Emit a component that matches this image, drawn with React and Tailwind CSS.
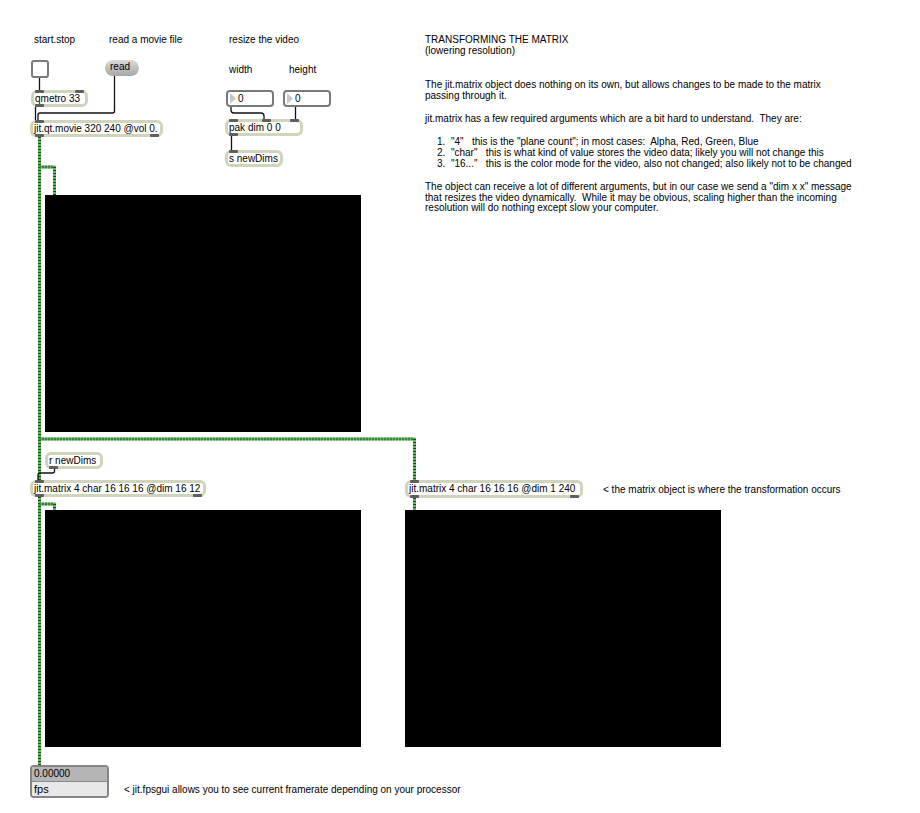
import React from 'react';

const font = { fontFamily: '"Liberation Sans", Arial, sans-serif' };

// small dark inlet / outlet tab
const Port = ({ className }) => (
    <div className={`absolute h-[3px] w-[9px] rounded-[1px] bg-[#5e5e5e] ${className}`} />
);

const Obj = ({ className, children, ports }) => (
    <div className={`absolute box-border rounded-[6px] border-[3px] border-[#d0d4bb] bg-white text-[10px] leading-[11px] text-black pl-[1px] whitespace-nowrap ${className}`}>
        {children}
        {ports}
    </div>
);

const NumBox = ({ className }) => (
    <div className={`absolute box-border flex items-center rounded-[4px] border-2 border-[#7a7a7a] bg-white text-[10px] leading-[11px] ${className}`}>
        <svg width="8" height="11" className="ml-[1px]">
            <polygon points="1,0 7,5.5 1,11" fill="#c8c8c8" />
        </svg>
        <span className="ml-[1px]">0</span>
    </div>
);

const Label = ({ className, children }) => (
    <div className={`absolute text-[10px] leading-[11px] text-black whitespace-pre ${className}`}>{children}</div>
);

const Cord = ({ d }) => (
    <g>
        <path d={d} fill="none" stroke="#5cbc5c" strokeWidth="3" />
        <path d={d} fill="none" stroke="#214421" strokeWidth="3" strokeDasharray="1 2" />
    </g>
);

const App = () => {
    return (
        <div className="relative w-[920px] h-[813px] overflow-hidden bg-white" style={font}>
            {/* patch cords */}
            <svg className="absolute left-0 top-0" width="920" height="813">
                <Cord d="M39.5 137 V480" />
                <Cord d="M39.5 497 V765" />
                <Cord d="M39.5 167 H54.5 V195" />
                <Cord d="M39.5 439 H414.5 V480" />
                <Cord d="M39.5 504 H54.5 V510" />
                <Cord d="M414.5 498 V510" />
                <g fill="none" stroke="#111" strokeWidth="1.3">
                    <path d="M39.5 78 V90" />
                    <path d="M35.5 107 V120" />
                    <path d="M114.5 76 V111 Q114.5 113 112.5 113 H40 Q38 113 38 115 V120" />
                    <path d="M231 106 V110 Q231 113 234 113 H261 Q264 113 264 116 V119" />
                    <path d="M295.5 106 V119" />
                    <path d="M231.5 136 V150" />
                    <path d="M54.5 469 V471 Q54.5 473 52.5 473 H40 Q38 473 38 475 V480" />
                </g>
            </svg>

            {/* videos */}
            <div className="absolute left-[45px] top-[195px] h-[237px] w-[316px] bg-black" />
            <div className="absolute left-[45px] top-[510px] h-[237px] w-[316px] bg-black" />
            <div className="absolute left-[405px] top-[510px] h-[237px] w-[316px] bg-black" />

            {/* labels */}
            <Label className="left-[34px] top-[34px]">start.stop</Label>
            <Label className="left-[109px] top-[34px]">read a movie file</Label>
            <Label className="left-[229px] top-[34px]">resize the video</Label>
            <Label className="left-[229px] top-[64px]">width</Label>
            <Label className="left-[289px] top-[64px]">height</Label>

            {/* toggle + message */}
            <div className="absolute left-[31px] top-[60px] h-[18px] w-[18px] box-border rounded-[3px] border-2 border-[#7a7a7a] bg-white" />
            <div className="absolute left-[105px] top-[60px] h-[16px] w-[34px] rounded-full bg-gradient-to-b from-[#dcdcdc] to-[#a6a6a6] text-[10px] leading-[14px] pl-[5px]">
                read
            </div>

            <Obj className="left-[31px] top-[90px] h-[17px] w-[57px]"
                ports={<><Port className="left-[1px] top-[-3px]" /><Port className="right-[1px] top-[-3px]" /><Port className="left-[1px] bottom-[-3px]" /></>}>
                qmetro 33
            </Obj>
            <Obj className="left-[30px] top-[120px] h-[17px] w-[133px]"
                ports={<><Port className="left-[2px] top-[-3px]" /><Port className="left-[2px] bottom-[-3px]" /><Port className="right-[1px] bottom-[-3px]" /></>}>
                jit.qt.movie 320 240 @vol 0.
            </Obj>

            <NumBox className="left-[226px] top-[90px] h-[17px] w-[48px]" />
            <NumBox className="left-[283px] top-[90px] h-[17px] w-[48px]" />

            <Obj className="left-[225px] top-[119px] h-[17px] w-[78px]"
                ports={<><Port className="left-[1px] top-[-3px]" /><Port className="left-[34px] top-[-3px]" /><Port className="right-[1px] top-[-3px]" /><Port className="left-[1px] bottom-[-3px]" /></>}>
                pak dim 0 0
            </Obj>
            <Obj className="left-[225px] top-[150px] h-[17px] w-[58px]"
                ports={<Port className="left-[1px] top-[-3px]" />}>
                s newDims
            </Obj>

            <Obj className="left-[45px] top-[452px] h-[17px] w-[58px]"
                ports={<Port className="left-[1px] bottom-[-3px]" />}>
                r newDims
            </Obj>
            <Obj className="left-[30px] top-[480px] h-[17px] w-[176px]"
                ports={<><Port className="left-[2px] top-[-3px]" /><Port className="left-[2px] bottom-[-3px]" /><Port className="right-[1px] bottom-[-3px]" /></>}>
                jit.matrix 4 char 16 16 16 @dim 16 12
            </Obj>
            <Obj className="left-[405px] top-[480px] h-[18px] w-[178px]"
                ports={<><Port className="left-[2px] top-[-3px]" /><Port className="left-[2px] bottom-[-3px]" /><Port className="right-[1px] bottom-[-3px]" /></>}>
                jit.matrix 4 char 16 16 16 @dim 1 240
            </Obj>
            <Label className="left-[603px] top-[484px]">{'< the matrix object is where the transformation occurs'}</Label>

            {/* fps gui */}
            <div className="absolute left-[30px] top-[765px] flex h-[33px] w-[79px] box-border flex-col overflow-hidden rounded-[4px] border-2 border-[#858585]">
                <div className="h-[15px] border-b border-[#8a8a8a] bg-[#b5b5b5] pl-[2px] text-[10px] leading-[14px]">0.00000</div>
                <div className="flex-1 bg-[#e8e8e8] pl-[2px] text-[11px] leading-[15px]">fps</div>
            </div>
            <Label className="left-[124px] top-[784px]">{'< jit.fpsgui allows you to see current framerate depending on your processor'}</Label>

            {/* explanation comment */}
            <div className="absolute left-[425px] top-[34px] flex flex-col text-[10px] leading-[11px] text-black whitespace-pre">
                <p>{'TRANSFORMING THE MATRIX\n(lowering resolution)'}</p>
                <p className="mt-[23px]">{'The jit.matrix object does nothing on its own, but allows changes to be made to the matrix\npassing through it.'}</p>
                <p className="mt-[12px]">{'jit.matrix has a few required arguments which are a bit hard to understand.  They are:'}</p>
                <ol className="mt-[12px] pl-[12px]">
                    <li>{'1.  "4"   this is the "plane count"; in most cases:  Alpha, Red, Green, Blue'}</li>
                    <li>{'2.  "char"   this is what kind of value stores the video data; likely you will not change this'}</li>
                    <li>{'3.  "16..."   this is the color mode for the video, also not changed; also likely not to be changed'}</li>
                </ol>
                <p className="mt-[13px] leading-[10.5px]">{'The object can receive a lot of different arguments, but in our case we send a "dim x x" message\nthat resizes the video dynamically.  While it may be obvious, scaling higher than the incoming\nresolution will do nothing except slow your computer.'}</p>
            </div>
        </div>
    );
};

export default App;
